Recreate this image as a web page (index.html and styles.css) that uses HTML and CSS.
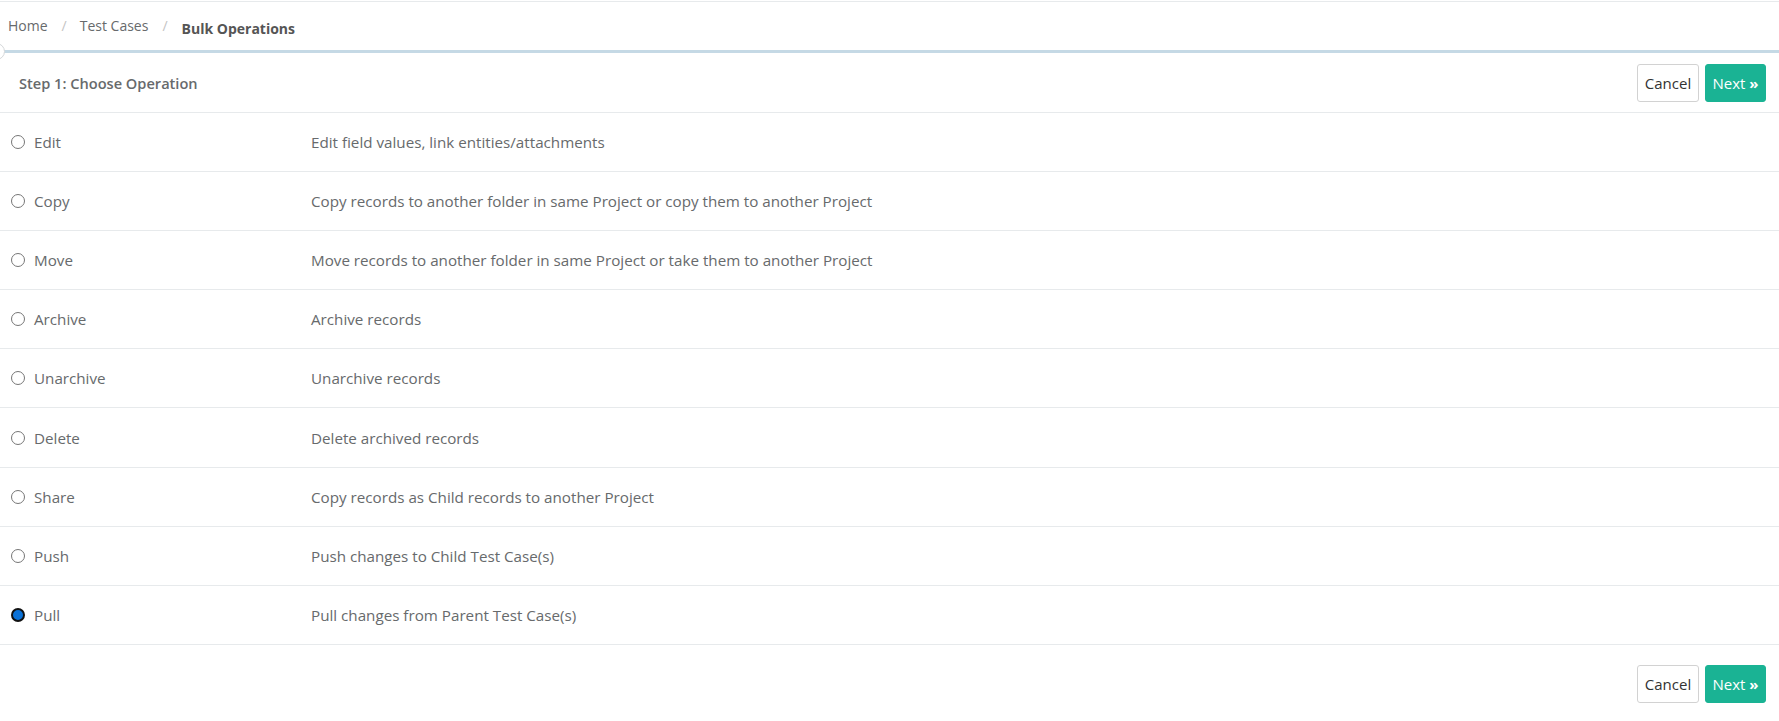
FILE: index.html
```html
<!DOCTYPE html>
<html lang="en">
  <head>
    <meta charset="UTF-8" />
    <title>Bulk Operations</title>
    <link rel="stylesheet" href="styles.css">
  </head>
  <body>
    <div class="topbar">
      <ol class="breadcrumb">
        <li><a href="#">Home</a></li>
        <li class="sep">/</li>
        <li><a href="#">Test Cases</a></li>
        <li class="sep">/</li>
        <li class="active">Bulk Operations</li>
      </ol>
      <span class="collapse-knob"></span>
    </div>

    <div class="step-head">
      <span class="step-title">Step 1: Choose Operation</span>
      <div class="actions">
        <button class="btn btn-white">Cancel</button>
        <button class="btn btn-primary">Next <span class="chev">&raquo;</span></button>
      </div>
    </div>

    <div class="ops">
      <label class="op"><span class="name"><input type="radio" name="op"> Edit</span><span class="desc">Edit field values, link entities/attachments</span></label>
      <label class="op"><span class="name"><input type="radio" name="op"> Copy</span><span class="desc">Copy records to another folder in same Project or copy them to another Project</span></label>
      <label class="op"><span class="name"><input type="radio" name="op"> Move</span><span class="desc">Move records to another folder in same Project or take them to another Project</span></label>
      <label class="op"><span class="name"><input type="radio" name="op"> Archive</span><span class="desc">Archive records</span></label>
      <label class="op"><span class="name"><input type="radio" name="op"> Unarchive</span><span class="desc">Unarchive records</span></label>
      <label class="op"><span class="name"><input type="radio" name="op"> Delete</span><span class="desc">Delete archived records</span></label>
      <label class="op"><span class="name"><input type="radio" name="op"> Share</span><span class="desc">Copy records as Child records to another Project</span></label>
      <label class="op"><span class="name"><input type="radio" name="op"> Push</span><span class="desc">Push changes to Child Test Case(s)</span></label>
      <label class="op"><span class="name"><input type="radio" name="op" checked> Pull</span><span class="desc">Pull changes from Parent Test Case(s)</span></label>
    </div>

    <div class="step-foot">
      <button class="btn btn-white">Cancel</button>
      <button class="btn btn-primary">Next <span class="chev">&raquo;</span></button>
    </div>
  </body>
</html>
```

FILE: styles.css
```css
body {
  margin: 0;
  font-family: "Open Sans", "Liberation Sans", sans-serif;
  font-size: 14px;
  color: #676a6c;
  background: #fff;
  overflow: hidden;
}
.topbar {
  position: relative;
  border-top: 1px solid #e7eaec;
  margin-top: 1px;
  height: 48px;
  border-bottom: 3px solid #c5d9e5;
}
.breadcrumb {
  display: flex;
  align-items: flex-start;
  list-style: none;
  margin: 0;
  padding: 14px 0 0 8px;
}
.breadcrumb a {
  color: #676a6c;
  text-decoration: none;
}
.breadcrumb .sep {
  color: #c4c4c4;
  padding: 0 13px 0 14px;
}
.breadcrumb .active {
  font-weight: 700;
  color: #555;
  padding-top: 3px;
  margin-left: 1px;
}
.collapse-knob {
  position: absolute;
  left: -12px;
  bottom: -10px;
  width: 15px;
  height: 15px;
  border: 1px solid #d5d8da;
  border-radius: 50%;
  background: #fff;
}
.step-head {
  display: flex;
  align-items: center;
  justify-content: space-between;
  height: 59px;
  padding: 0 13px 0 19px;
  border-bottom: 1px solid #e7eaec;
}
.step-title {
  font-weight: 600;
  font-size: 14.6px;
}
.actions, .step-foot {
  display: flex;
  gap: 6px;
}
.step-foot {
  justify-content: flex-end;
  padding: 20px 13px 0 0;
}
.btn {
  font-family: inherit;
  font-size: 15px;
  line-height: 20px;
  height: 38px;
  padding: 0 6px;
  border-radius: 3px;
  cursor: pointer;
}
.btn-white {
  background: #fff;
  border: 1px solid #d2d2d2;
  color: #333;
  width: 62px;
}
.btn-primary {
  background: #1ab394;
  border: 1px solid #1ab394;
  color: #fff;
  width: 61px;
}
.chev {
  font-weight: 700;
}
.op {
  display: flex;
  align-items: center;
  height: 58.1px;
  font-size: 15.2px;
  border-bottom: 1px solid #e7eaec;
  cursor: pointer;
}
.op .name {
  display: flex;
  align-items: center;
  width: 311px;
  padding-left: 11px;
  box-sizing: border-box;
}
.op input {
  appearance: none;
  width: 14px;
  height: 14px;
  margin: 0 9px 0 0;
  border: 1px solid #767676;
  border-radius: 50%;
  background: #fff;
}
.op input:checked {
  border: 2px solid #111;
  background: #0b72d8;
}
```
